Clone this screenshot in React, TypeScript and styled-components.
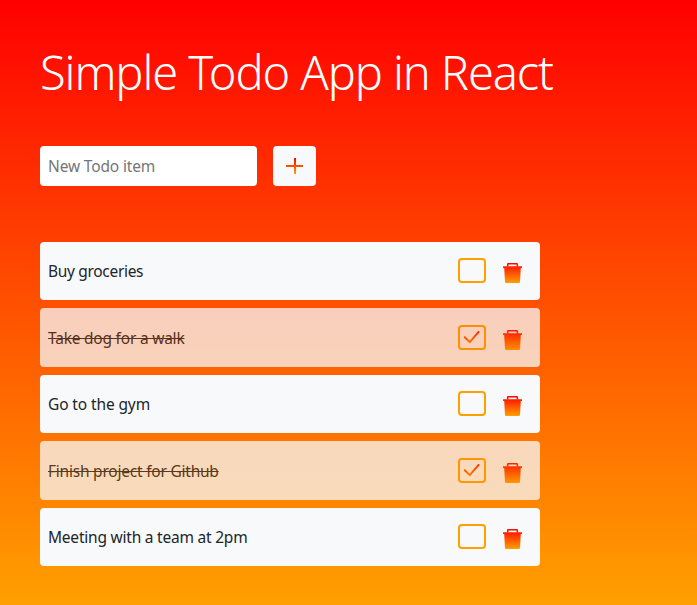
import React from "react";
import styled, { createGlobalStyle } from "styled-components";

const GlobalStyle = createGlobalStyle`
  * { box-sizing: border-box; }
  body {
    margin: 0;
    font-family: "Segoe UI", "Noto Sans", sans-serif;
    font-size: 15.5px;
    line-height: 24px;
    color: #212529;
  }
`;

const Page = styled.main`
  min-height: 605px;
  padding: 43px 40px 39px;
  background: linear-gradient(to bottom, #ff0000, #ffa000);
`;

const Title = styled.h1`
  margin: 0 0 45px;
  font-size: 47px;
  line-height: 58px;
  font-weight: 300;
  letter-spacing: -1.1px;
  white-space: nowrap;
  color: #fff;
`;

const NewItemForm = styled.form`
  display: flex;
  gap: 16px;
  height: 40px;
  margin-bottom: 55.75px;
`;

const NewItemInput = styled.input`
  width: 217px;
  padding: 0 8px;
  border: 0;
  border-radius: 4px;
  background: #fff;
  font: inherit;
  letter-spacing: -0.15px;
  outline: none;
  &::placeholder {
    color: #757575;
    opacity: 1;
  }
`;

const AddButton = styled.button`
  display: flex;
  align-items: center;
  justify-content: center;
  width: 43px;
  padding: 0;
  border: 0;
  border-radius: 4px;
  background: #f8f9fa;
`;

const List = styled.ul`
  display: flex;
  flex-direction: column;
  gap: 8px;
  width: 500px;
  margin: 0;
  padding: 0;
  list-style: none;
`;

const Item = styled.li<{ $done: boolean }>`
  display: flex;
  align-items: center;
  height: 58.5px;
  padding: 0 17px 0 8px;
  border-radius: 4px;
  background: #f8f9fa;
  opacity: ${({ $done }) => ($done ? 0.75 : 1)};
`;

const Label = styled.span<{ $done: boolean; $spacing: number }>`
  flex: 1;
  letter-spacing: ${({ $spacing }) => $spacing}px;
  white-space: nowrap;
  text-decoration: ${({ $done }) => ($done ? "line-through" : "none")};
`;

const Toggle = styled.button`
  display: flex;
  width: 28px;
  height: 25px;
  margin: 0 17px 1px 0;
  padding: 0;
  border: 2px solid #ffa000;
  border-radius: 4px;
  background: transparent;
`;

const DeleteButton = styled.button`
  display: flex;
  margin-top: 4px;
  padding: 0;
  border: 0;
  background: transparent;
`;

const Icon = styled.svg`
  display: block;
  flex: none;
`;

function FireGradient({ id, from, to }: { id: string; from: number; to: number }) {
  return (
    <defs>
      <linearGradient id={id} gradientUnits="userSpaceOnUse" x1="0" y1={from} x2="0" y2={to}>
        <stop offset="0" stopColor="#ff0000" />
        <stop offset="1" stopColor="#ffa000" />
      </linearGradient>
    </defs>
  );
}

function PlusIcon() {
  return (
    <Icon width="17" height="16" viewBox="0 0 17 16">
      <FireGradient id="plus" from={0} to={16} />
      <path d="M8 0h2v7h7v2h-7v7H8V9H0V7h8z" fill="url(#plus)" />
    </Icon>
  );
}

function CheckIcon({ id }: { id: string }) {
  return (
    <Icon width="24" height="21" viewBox="0 0 24 21">
      <FireGradient id={id} from={2} to={19} />
      <path d="M4.7 10.2 L9.8 15.2 L18.6 4.9" fill="none" stroke={`url(#${id})`} strokeWidth="1.9" strokeLinecap="round" />
    </Icon>
  );
}

function TrashIcon({ id }: { id: string }) {
  return (
    <Icon width="20" height="20" viewBox="0 0 20 20">
      <FireGradient id={id} from={0} to={20} />
      <path
        d="M4.7 3.5V1.4Q4.7 .8 5.3 .8H13.7Q14.3 .8 14.3 1.4V3.5"
        fill="none"
        stroke={`url(#${id})`}
        strokeWidth="1.6"
      />
      <path d="M.4 3.2h18.2q.4 0 .4.4v.8q0 .6-.4.6H17.8L17 19q-.1 1-1 1H3q-.9 0-1-1L1.2 5H.4Q0 5 0 4.4v-.8q0-.4.4-.4z" fill={`url(#${id})`} />
    </Icon>
  );
}

const todos = [
  { text: "Buy groceries", done: false, spacing: -0.32 },
  { text: "Take dog for a walk", done: true, spacing: -0.22 },
  { text: "Go to the gym", done: false, spacing: -0.12 },
  { text: "Finish project for Github", done: true, spacing: -0.22 },
  { text: "Meeting with a team at 2pm", done: false, spacing: -0.22 },
];

export default function App() {
  return (
    <Page>
      <GlobalStyle />
      <Title>Simple Todo App in React</Title>
      <NewItemForm>
        <NewItemInput placeholder="New Todo item" />
        <AddButton type="button" aria-label="Add">
          <PlusIcon />
        </AddButton>
      </NewItemForm>
      <List>
        {todos.map((todo, i) => (
          <Item key={todo.text} $done={todo.done}>
            <Label $done={todo.done} $spacing={todo.spacing}>
              {todo.text}
            </Label>
            <Toggle type="button" aria-label="Toggle">
              {todo.done && <CheckIcon id={`check-${i}`} />}
            </Toggle>
            <DeleteButton type="button" aria-label="Delete">
              <TrashIcon id={`trash-${i}`} />
            </DeleteButton>
          </Item>
        ))}
      </List>
    </Page>
  );
}
